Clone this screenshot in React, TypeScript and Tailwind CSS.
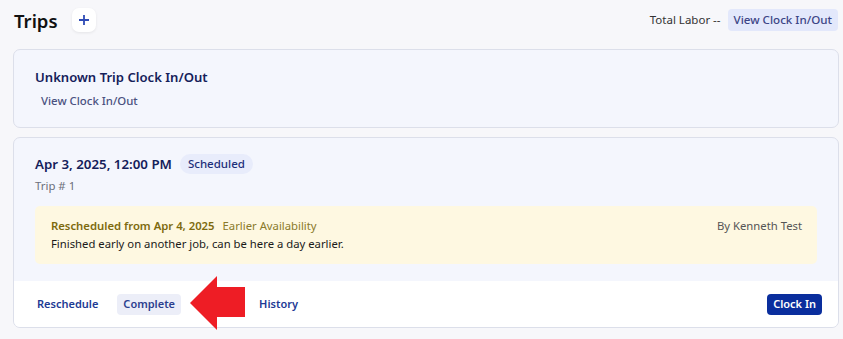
import React from "react";

const font = { fontFamily: '"Noto Sans", "Segoe UI", sans-serif' };

function LeftArrow() {
  return (
    <svg width="56" height="56" viewBox="0 0 56 56" className="absolute left-[190px] top-[275px]">
      <polygon points="0,28 27,1 27,12 55,12 55,42 27,42 27,55" fill="#ee1d25" />
    </svg>
  );
}

export default function App() {
  return (
    <div className="relative w-[843px] h-[339px] bg-[#f7f7fa] overflow-hidden text-[#1f2937]" style={font}>
      {/* header */}
      <header className="h-[49px] pl-[14px] pr-[5px] flex items-start pt-[8px]">
        <h1 className="text-[18.5px] leading-[24px] font-semibold text-[#111] mr-[14px] mt-[1px]">Trips</h1>
        <button className="w-[24px] h-[24px] bg-white rounded-[7px] shadow-[0_1px_3px_rgba(0,0,0,0.08)] flex items-center justify-center text-[#2f4bb5]">
          <svg width="12" height="12" viewBox="0 0 12 12">
            <path d="M6 1v10M1 6h10" stroke="currentColor" strokeWidth="1.8" />
          </svg>
        </button>
        <div className="ml-auto flex items-center gap-[7px] mt-[1px]">
          <span className="text-[11.5px] text-[#333]">Total Labor --</span>
          <button className="h-[22px] px-[6px] rounded-[4px] bg-[#e3e8fb] text-[11.6px] text-[#3c4586] font-medium">
            View Clock In/Out
          </button>
        </div>
      </header>

      <div className="pl-[13px] pr-[4px] flex flex-col gap-[9px]">
        {/* unknown trip */}
        <section className="h-[79px] rounded-[7px] border border-[#dcdfea] bg-[#f4f6fd] pl-[21px] pt-[17px]">
          <h2 className="text-[13.1px] leading-[20px] font-semibold text-[#14205a]">Unknown Trip Clock In/Out</h2>
          <button className="mt-[4px] ml-[6px] text-[11.4px] leading-[16px] text-[#4a5180] font-medium">View Clock In/Out</button>
        </section>

        {/* trip card */}
        <section className="rounded-[7px] border border-[#dcdfea] bg-[#f4f6fd] overflow-hidden">
          <div className="pl-[21px] pr-[21px] pt-[15px] pb-[17px]">
            <div className="flex items-center gap-[8px]">
              <span className="text-[13.3px] leading-[22px] font-semibold text-[#14205a]">Apr 3, 2025, 12:00 PM</span>
              <span className="h-[20px] px-[8px] rounded-full bg-[#e8ecfb] text-[11.5px] leading-[20px] text-[#1d2f7a] font-medium">Scheduled</span>
            </div>
            <div className="mt-[3px] text-[11.4px] leading-[16px] text-[#6b6f7b]">Trip # 1</div>
            <div className="mt-[12px] rounded-[5px] bg-[#fef8e1] pl-[16px] pr-[15px] pt-[11px] pb-[11px] flex items-start">
              <div className="flex-1">
                <div className="text-[11.3px] leading-[18px]">
                  <span className="font-semibold text-[#7d6a0e]">Rescheduled from Apr 4, 2025</span>
                  <span className="ml-[8px] text-[#8a7a2a]">Earlier Availability</span>
                </div>
                <div className="text-[11.3px] leading-[18px] text-[#1a1a1a]">Finished early on another job, can be here a day earlier.</div>
              </div>
              <span className="text-[11.3px] leading-[18px] text-[#555]">By Kenneth Test</span>
            </div>
          </div>
          <footer className="h-[46px] bg-white flex items-center pl-[17px] pr-[16px]">
            <button className="px-[6px] h-[21px] text-[11px] font-semibold text-[#1d3a94]">Reschedule</button>
            <button className="ml-[13px] px-[6px] h-[21px] rounded-[4px] bg-[#eceef8] text-[11px] font-semibold text-[#2c3f8f]">Complete</button>
            <button className="ml-[72px] px-[6px] h-[21px] text-[11px] font-semibold text-[#1d3a94]">History</button>
            <button className="ml-auto px-[6px] h-[21px] rounded-[4px] bg-[#0a2e9d] text-[11px] font-semibold text-white">Clock In</button>
          </footer>
        </section>
      </div>

      <LeftArrow />
    </div>
  );
}
